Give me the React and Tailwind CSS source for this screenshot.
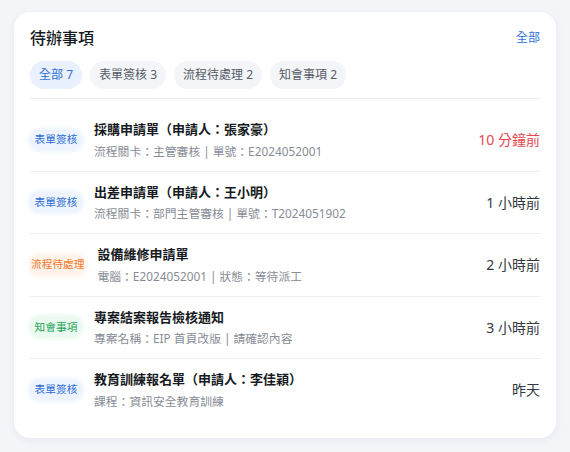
// App.jsx

import React from 'react';

const tabs = [
  { label: '全部', count: 7, active: true },
  { label: '表單簽核', count: 3 },
  { label: '流程待處理', count: 2 },
  { label: '知會事項', count: 2 },
];

const badgeStyles = {
  form: 'text-[#2f6fd6] bg-[#edf4ff] shadow-[0_0_4px_2px_#edf4ff]',
  flow: 'text-[#f0762b] bg-[#fff3ea] shadow-[0_0_4px_2px_#fff3ea]',
  notice: 'text-[#1fa35a] bg-[#eafaf0] shadow-[0_0_4px_2px_#eafaf0]',
};

const items = [
  {
    type: 'form',
    badge: '表單簽核',
    title: '採購申請單（申請人：張家豪）',
    sub: ['流程關卡：主管審核', '單號：E2024052001'],
    time: '10 分鐘前',
    urgent: true,
  },
  {
    type: 'form',
    badge: '表單簽核',
    title: '出差申請單（申請人：王小明）',
    sub: ['流程關卡：部門主管審核', '單號：T2024051902'],
    time: '1 小時前',
  },
  {
    type: 'flow',
    badge: '流程待處理',
    title: '設備維修申請單',
    sub: ['電腦：E2024052001', '狀態：等待派工'],
    time: '2 小時前',
  },
  {
    type: 'notice',
    badge: '知會事項',
    title: '專案結案報告檢核通知',
    sub: ['專案名稱：EIP 首頁改版', '請確認內容'],
    time: '3 小時前',
  },
  {
    type: 'form',
    badge: '表單簽核',
    title: '教育訓練報名單（申請人：李佳穎）',
    sub: ['課程：資訊安全教育訓練'],
    time: '昨天',
  },
];

const TodoRow = ({ item }) => (
  <div className="flex items-center gap-3 py-[11px] border-b border-[#eceef2] last:border-b-0">
    <span
      className={`shrink-0 min-w-[52px] justify-center rounded-full px-[1px] h-5 flex items-center text-[10.7px] leading-none ${badgeStyles[item.type]}`}
    >
      {item.badge}
    </span>
    <div className="flex-1 min-w-0">
      <div className="text-[13px] leading-[19.5px] font-bold text-[#161a22]">
        {item.title}
      </div>
      <div className="mt-[3px] text-[11.8px] leading-[17px] text-[#878c95]">
        {item.sub.map((s, i) => (
          <span key={i}>
            {i > 0 && <span className="mx-[3px]">|</span>}
            {s}
          </span>
        ))}
      </div>
    </div>
    <div
      className={`shrink-0 text-[14px] ${
        item.urgent ? 'text-[#e5484d]' : 'text-[#333840]'
      }`}
    >
      {item.time}
    </div>
  </div>
);

export default function App() {
  return (
    <div
      className="w-[570px] h-[452px] bg-[#f3f5f9] pt-3 px-[14px]"
      style={{ fontFamily: '"Noto Sans", "Noto Sans CJK TC", sans-serif' }}
    >
      <div className="bg-white rounded-2xl shadow-[0_2px_8px_rgba(30,40,70,0.06)] px-4 pt-[14px] pb-[17px]">
        <div className="flex items-center justify-between">
          <h2 className="text-[16px] leading-6 font-medium text-[#161a22]">
            待辦事項
          </h2>
          <a className="text-[12px] text-[#2f6fd6]">全部</a>
        </div>
        <div className="flex gap-2 mt-[11px] pb-[9px] border-b border-[#eceef2]">
          {tabs.map((t) => (
            <span
              key={t.label}
              className={`h-7 px-[9px] rounded-full flex items-center text-[12px] ${
                t.active
                  ? 'bg-[#e9f1fe] text-[#2f6fd6]'
                  : 'bg-[#f3f5f8] text-[#555b66]'
              }`}
            >
              {t.label} {t.count}
            </span>
          ))}
        </div>
        <div className="pt-[10px]">
          {items.map((item, i) => (
            <TodoRow key={i} item={item} />
          ))}
        </div>
      </div>
    </div>
  );
}
